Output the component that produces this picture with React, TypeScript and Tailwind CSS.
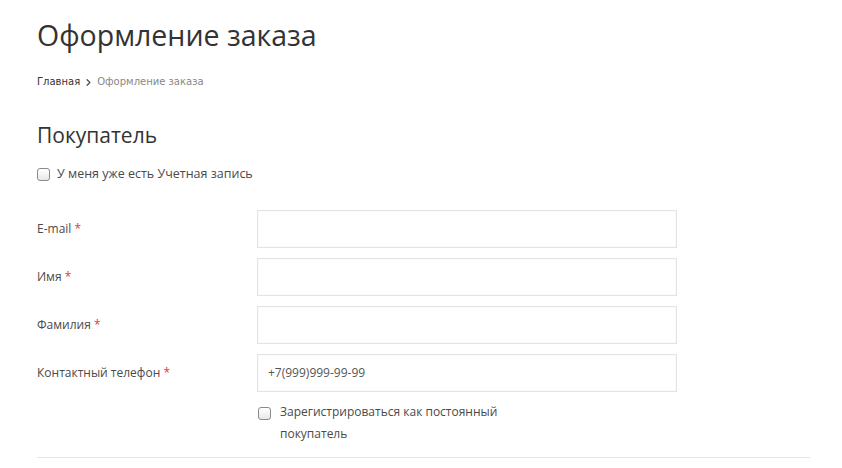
import { ChevronRight } from "lucide-react";

const FIELDS = [
  { label: "E-mail", placeholder: "" },
  { label: "Имя", placeholder: "" },
  { label: "Фамилия", placeholder: "" },
  { label: "Контактный телефон", placeholder: "+7(999)999-99-99" },
];

function Box() {
  return (
    <span className="inline-block w-[13px] h-[13px] shrink-0 rounded-[3px] border border-[#8a8a8a] bg-gradient-to-b from-white to-[#e8e8e8]" />
  );
}

export default function App() {
  return (
    <div className="min-h-[468px] bg-white px-[37px] pt-[15px] text-[#444]" style={{ fontFamily: '"Open Sans", "DejaVu Sans", sans-serif' }}>
      <h1 className="text-[28.5px] leading-[40px] text-[#333]">Оформление заказа</h1>
      <div className="flex items-center mt-[20px] text-[10px] leading-[14px]" style={{ fontFamily: '"DejaVu Sans", sans-serif' }}>
        <span className="text-[#333]">Главная</span>
        <ChevronRight size={11} strokeWidth={3} className="mx-[3px] text-[#555]" />
        <span className="text-[#888]">Оформление заказа</span>
      </div>

      <h2 className="mt-[31px] text-[21px] leading-[30px] text-[#333]">Покупатель</h2>
      <label className="flex items-center gap-[7px] mt-[15px] text-[12.5px] text-[#4a4a4a]">
        <Box />
        <span>У меня уже есть Учетная запись</span>
      </label>

      <div className="mt-[26px] flex flex-col gap-[10px]">
        {FIELDS.map((f) => (
          <div key={f.label} className="flex items-center">
            <div className="w-[220px] text-[12px] text-[#4a4a4a]">
              {f.label} <span className="text-[#e53935]">*</span>
            </div>
            <input
              className="w-[420px] h-[38px] border border-[#e3e3e3] shadow-[inset_0_0_2px_rgba(0,0,0,0.06)] px-[10px] text-[12px] text-[#555] placeholder:text-[#555] outline-none"
              placeholder={f.placeholder}
            />
          </div>
        ))}
      </div>

      <label className="flex items-start gap-[9px] ml-[221px] mt-[9px] text-[12px] leading-[22px] text-[#4a4a4a]">
        <span className="mt-[4px]"><Box /></span>
        <span className="w-[230px]">Зарегистрироваться как постоянный покупатель</span>
      </label>

      <div className="mt-[12px] w-[773px] border-t border-[#e6e6e6]" />
    </div>
  );
}
